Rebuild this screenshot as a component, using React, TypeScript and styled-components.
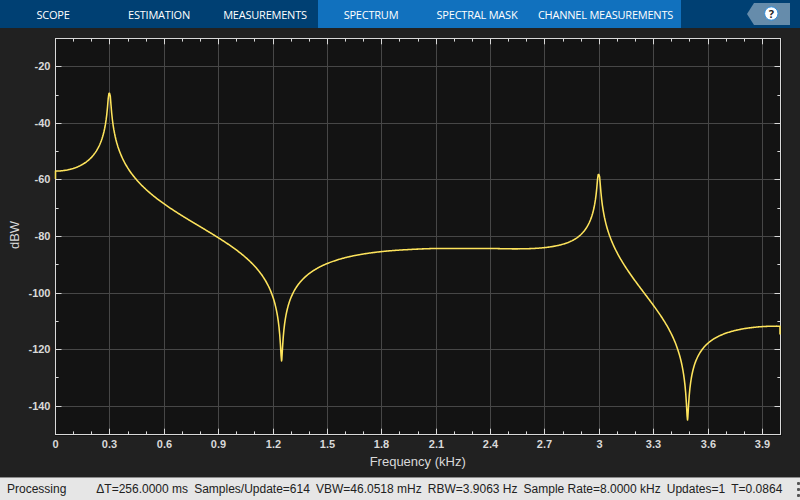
import React from "react";
import styled, { createGlobalStyle, css } from "styled-components";

const GlobalStyle = createGlobalStyle`
  html, body { margin: 0; padding: 0; background: #212121; }
  *, *::before, *::after { box-sizing: border-box; }
`;

const Window = styled.div`
  display: flex;
  flex-direction: column;
  width: 800px;
  height: 500px;
  overflow: hidden;
  background: #212121;
  font-family: "Liberation Sans", Arial, sans-serif;
`;

const Toolstrip = styled.header`
  display: flex;
  align-items: stretch;
  height: 28px;
  flex: none;
  background: #004073;
`;

const Tab = styled.div<{ $width?: number; $contextual?: boolean }>`
  display: flex;
  align-items: center;
  justify-content: center;
  width: ${(p) => p.$width ?? 106}px;
  padding-top: 2px;
  color: #fff;
  font-family: "Open Sans", "Noto Sans", sans-serif;
  font-size: 11px;
  letter-spacing: -0.22px;
  line-height: 14px;
  white-space: nowrap;
  ${(p) =>
    p.$contextual &&
    css`
      background: #1171be;
    `}
`;

const HelpSlot = styled.div`
  display: flex;
  margin-left: auto;
  padding: 3px 10px 0 0;
`;

const ChartArea = styled.main`
  flex: 1;
  min-height: 0;

  svg {
    display: block;
  }
`;

const StatusBar = styled.footer`
  display: flex;
  align-items: center;
  flex: none;
  height: 23px;
  padding-left: 7px;
  border-top: 1px solid #8c8c8c;
  background: #e6e6e6;
  color: #212121;
  font-size: 12px;
  line-height: 14px;
  white-space: pre;
`;

const StatusState = styled.span`
  width: 89.3px;
`;

const StatusReadings = styled.div`
  display: flex;
  gap: 6.1px;
`;

const Grip = styled.div`
  display: flex;
  flex-direction: column;
  gap: 3px;
  margin-left: auto;

  i {
    width: 3px;
    height: 3px;
    background: #555;
    border-radius: 1px;
  }
`;

const TickLabel = styled.text`
  fill: #d9d9d9;
  font: bold 11px "Liberation Sans", Arial, sans-serif;
`;

const AxisTitle = styled.text`
  fill: #d9d9d9;
  font: 13px "Liberation Sans", Arial, sans-serif;
  text-anchor: middle;
`;

/* Plot geometry, in window pixels. */
const LEFT = 55;
const RIGHT = 780;
const TOP = 38;
const BOTTOM = 434;
const HEADER = 28;
const xOf = (kHz: number) => LEFT + (kHz / 4) * (RIGHT - LEFT);
const yOf = (db: number) => TOP + ((-10 - db) / 140) * (BOTTOM - TOP);

/* Resonances (sign -1) and notches (sign +1) of the response. */
const SINGULARITIES = [
  { f: 0.3, sign: -1, soft: 1.07, p: 4 },
  { f: 1.25, sign: 1, soft: 0.68, p: 2 },
  { f: 3.0, sign: -1, soft: 1.12, p: 4 },
  { f: 3.4897, sign: 1, soft: 0.66, p: 2 },
];
const omega = (x: number) => ((x - LEFT) / (RIGHT - LEFT)) * Math.PI;

function poleZeroY(x: number) {
  let db = -82.2;
  for (const s of SINGULARITIES) {
    const w0 = (s.f / 4) * Math.PI;
    const d = Math.abs(Math.cos(omega(x)) - Math.cos(w0));
    const e = (Math.sin(w0) * s.soft * Math.PI) / (RIGHT - LEFT);
    db += (s.sign * 20 * Math.log10(d ** s.p + e ** s.p)) / s.p;
  }
  return yOf(db);
}

/* Slow roll-off under the resonances: [x, vertical offset]. */
const TREND: [number, number][] = [
  [55, 0], [110, 0.3], [164, -0.7], [218, -2.1], [250, -3], [282, -3.7],
  [310, -4.2], [330, -4.3], [353, -3.9], [382, -2.7], [407, -1.1], [437, 1.2],
  [490, 7.2], [513, 10.8], [544, 16.2], [560, 19.2], [580, 23.2], [600, 27],
  [620, 31], [633, 33.8], [653, 37.7], [678, 41.5], [698, 43.6], [708, 44.2],
  [727, 45], [747, 45.5], [780, 46],
];
const SLOPES = TREND.map((_, i) => {
  const a = TREND[Math.max(0, i - 1)];
  const b = TREND[Math.min(TREND.length - 1, i + 1)];
  return (b[1] - a[1]) / (b[0] - a[0]);
});

function trend(x: number) {
  let i = 0;
  while (i < TREND.length - 2 && x > TREND[i + 1][0]) i++;
  const [x0, y0] = TREND[i];
  const [x1, y1] = TREND[i + 1];
  const h = x1 - x0;
  const t = (x - x0) / h;
  return (
    (1 + 2 * t) * (1 - t) ** 2 * y0 +
    t * (1 - t) ** 2 * h * SLOPES[i] +
    t * t * (3 - 2 * t) * y1 +
    t * t * (t - 1) * h * SLOPES[i + 1]
  );
}

const samples = new Set<number>(SINGULARITIES.map((s) => xOf(s.f)));
for (let x = LEFT; x <= RIGHT; x += 0.7) samples.add(x);
samples.add(RIGHT);
const TRACE =
  `M${LEFT + 0.5} 179L` +
  [...samples]
    .sort((a, b) => a - b)
    .map((x) => `${Math.max(x, LEFT + 0.5).toFixed(2)} ${(poleZeroY(x) + trend(x)).toFixed(2)}`)
    .join("L") +
  `L${RIGHT} 334.6`;

const X_TICKS = Array.from({ length: 39 }, (_, k) => k + 1);
const Y_TICKS = Array.from({ length: 13 }, (_, k) => -20 - 10 * k);

function Spectrum() {
  const gx = (k: number) => Math.round(xOf(k / 10)) + 0.5;
  const gy = (db: number) => Math.round(yOf(db)) + 0.5;
  return (
    <svg width="800" height="449" viewBox={`0 ${HEADER} 800 449`}>
      <rect x={LEFT} y={TOP} width={RIGHT - LEFT + 2} height={BOTTOM - TOP + 2} fill="#131313" />
      <g stroke="#474747">
        {X_TICKS.filter((k) => k % 3 === 0).map((k) => (
          <path key={k} d={`M${gx(k)} ${TOP}V${BOTTOM}`} />
        ))}
        {Y_TICKS.filter((d) => d % 20 === 0).map((d) => (
          <path key={d} d={`M${LEFT} ${gy(d)}H${RIGHT}`} />
        ))}
      </g>
      <g stroke="#d9d9d9" fill="none">
        <rect x={LEFT + 0.5} y={TOP + 0.5} width={RIGHT - LEFT} height={BOTTOM - TOP} />
        {X_TICKS.map((k) => {
          const len = k % 3 === 0 ? 6.3 : 3.6;
          return <path key={k} d={`M${gx(k)} ${TOP}v${len}M${gx(k)} ${BOTTOM + 1}v${-len}`} />;
        })}
        {Y_TICKS.map((d) => {
          const len = d % 20 === 0 ? 6.5 : 3.6;
          return <path key={d} d={`M${LEFT} ${gy(d)}h${len}M${RIGHT + 1} ${gy(d)}h${-len}`} />;
        })}
      </g>
      <path d={TRACE} fill="none" stroke="#fee45c" strokeWidth="1.55" strokeLinejoin="round" />
      {[0, ...X_TICKS.filter((k) => k % 3 === 0)].map((k) => (
        <TickLabel key={k} x={gx(k)} y="448" textAnchor="middle">
          {k / 10}
        </TickLabel>
      ))}
      {Y_TICKS.filter((d) => d % 20 === 0).map((d) => (
        <TickLabel key={d} x="50.5" y={gy(d) + 3.5} textAnchor="end">
          {d}
        </TickLabel>
      ))}
      <AxisTitle x="417.7" y="466">Frequency (kHz)</AxisTitle>
      <AxisTitle transform="translate(19 235) rotate(-90)">dBW</AxisTitle>
    </svg>
  );
}

function HelpButton() {
  return (
    <svg width="43" height="22" viewBox="0 0 43 22">
      <path d="M0 11L7 0H43V22H7Z" fill="#668cab" />
      <circle cx="24.3" cy="10.5" r="6.7" fill="#fff" stroke="#2f8ddb" strokeWidth="1" />
      <text
        x="24.3"
        y="14.5"
        textAnchor="middle"
        fill="#222"
        fontFamily="Open Sans, Noto Sans, sans-serif"
        fontWeight="bold"
        fontSize="11"
      >
        ?
      </text>
    </svg>
  );
}

const READINGS = [
  "ΔT=256.0000 ms",
  "Samples/Update=614",
  "VBW=46.0518 mHz",
  "RBW=3.9063 Hz",
  "Sample Rate=8.0000 kHz",
  "Updates=1",
  "T=0.0864",
];

export default function App() {
  return (
    <Window>
      <GlobalStyle />
      <Toolstrip>
        <Tab>SCOPE</Tab>
        <Tab>ESTIMATION</Tab>
        <Tab>MEASUREMENTS</Tab>
        <Tab $contextual>SPECTRUM</Tab>
        <Tab $contextual>SPECTRAL MASK</Tab>
        <Tab $contextual $width={151}>CHANNEL MEASUREMENTS</Tab>
        <HelpSlot>
          <HelpButton />
        </HelpSlot>
      </Toolstrip>
      <ChartArea>
        <Spectrum />
      </ChartArea>
      <StatusBar>
        <StatusState>Processing</StatusState>
        <StatusReadings>
          {READINGS.map((r) => (
            <span key={r}>{r}</span>
          ))}
        </StatusReadings>
        <Grip>
          <i />
          <i />
          <i />
        </Grip>
      </StatusBar>
    </Window>
  );
}
